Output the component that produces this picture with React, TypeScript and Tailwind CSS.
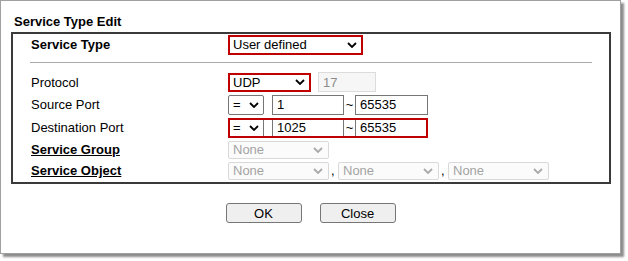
import type { ReactNode } from "react";

type Tone = "normal" | "red" | "disabled" | "bare";

function Chevron({ muted }: { muted?: boolean }) {
  return (
    <svg width="10" height="6" viewBox="0 0 10 6" className="shrink-0">
      <path d="M1 1l4 4 4-4" fill="none" stroke={muted ? "#a9a9a9" : "#000"} strokeWidth="1.8" />
    </svg>
  );
}

function Select({ text, tone = "normal", className = "" }: { text: string; tone?: Tone; className?: string }) {
  const toneCls =
    tone === "red"
      ? "border-2 border-[#c00000] pl-[3px] pr-[4px] bg-white text-black"
      : tone === "disabled"
      ? "border border-[#d9d9d9] rounded-[2px] pl-[4px] pr-[5px] bg-[#fbfbfb] text-[#a3a3a3]"
      : "border border-[#767676] rounded-[2px] pl-[4px] pr-[4px] bg-white text-black";
  return (
    <div className={`flex items-center justify-between shrink-0 ${toneCls} ${className}`}>
      <span>{text}</span>
      <Chevron muted={tone === "disabled"} />
    </div>
  );
}

function Input({ value, className = "", disabled }: { value: string; className?: string; disabled?: boolean }) {
  return (
    <div
      className={`flex items-center shrink-0 pl-[4px] ${
        disabled ? "border border-[#dcdcdc] bg-[#f6f6f6] text-[#8c8c8c]" : "border border-[#767676] bg-white text-black"
      } ${className}`}
    >
      {value}
    </div>
  );
}

function Row({ label, className, children }: { label: ReactNode; className: string; children: ReactNode }) {
  return (
    <div className={`flex items-center ${className}`}>
      <div className="w-[197px] shrink-0 pl-[18px] box-content">{label}</div>
      <div className="flex items-center">{children}</div>
    </div>
  );
}

function PortRange({ from, to, red }: { from: string; to: string; red?: boolean }) {
  return (
    <div className={`flex items-center ${red ? "outline-2 outline-[#c00000] -outline-offset-2" : ""}`}>
      <Select text="=" className="w-[36px] h-[20px]" />
      <Input value={from} className="ml-[8px] w-[72px] h-[20px]" />
      <span className="w-[11px] text-center">~</span>
      <Input value={to} className="w-[73px] h-[20px]" />
    </div>
  );
}

export default function App() {
  return (
    <div className="w-[628px] h-[261px] bg-white font-['Liberation_Sans',Arial,sans-serif] text-[13px] leading-[15px] text-black">
      <div className="w-[621px] h-[254px] border border-[#a0a0a0] shadow-[3px_3px_2px_rgba(0,0,0,0.45)] pt-[13px]">
        <div className="pl-[13px] font-bold h-[15px]">Service Type Edit</div>

        {/* Form box */}
        <div className="mt-[3px] ml-[10px] w-[600px] h-[152px] border-2 border-[#3a3a3a]">
          <Row className="h-[21px]" label={<span className="font-bold">Service Type</span>}>
            <Select text="User defined" tone="red" className="w-[135px] h-[20px]" />
          </Row>

          <div className="mt-[7px] ml-[17px] w-[562px] h-px bg-[#aaaaaa]" />

          <Row className="mt-[8px] h-[22px]" label="Protocol">
            <Select text="UDP" tone="red" className="w-[83px] h-[19px]" />
            <Input value="17" disabled className="ml-[7px] w-[58px] h-[20px]" />
          </Row>

          <Row className="h-[23px]" label="Source Port">
            <PortRange from="1" to="65535" />
          </Row>

          <Row className="h-[23px]" label="Destination Port">
            <PortRange from="1025" to="65535" red />
          </Row>

          <Row className="h-[21px]" label={<span className="font-bold underline">Service Group</span>}>
            <Select text="None" tone="disabled" className="w-[101px] h-[18px]" />
          </Row>

          <Row className="h-[21px]" label={<span className="font-bold underline">Service Object</span>}>
            <Select text="None" tone="disabled" className="w-[101px] h-[18px]" />
            <span className="w-[9px] pl-[2px]">,</span>
            <Select text="None" tone="disabled" className="w-[101px] h-[18px]" />
            <span className="w-[9px] pl-[2px]">,</span>
            <Select text="None" tone="disabled" className="w-[101px] h-[18px]" />
          </Row>
        </div>

        {/* Buttons */}
        <div className="mt-[19px] flex justify-center gap-[18px]">
          <button className="w-[76px] h-[20px] border border-[#767676] rounded-[3px] bg-[#efefef] text-[13px] leading-[15px]">
            OK
          </button>
          <button className="w-[76px] h-[20px] border border-[#767676] rounded-[3px] bg-[#efefef] text-[13px] leading-[15px]">
            Close
          </button>
        </div>
      </div>
    </div>
  );
}
